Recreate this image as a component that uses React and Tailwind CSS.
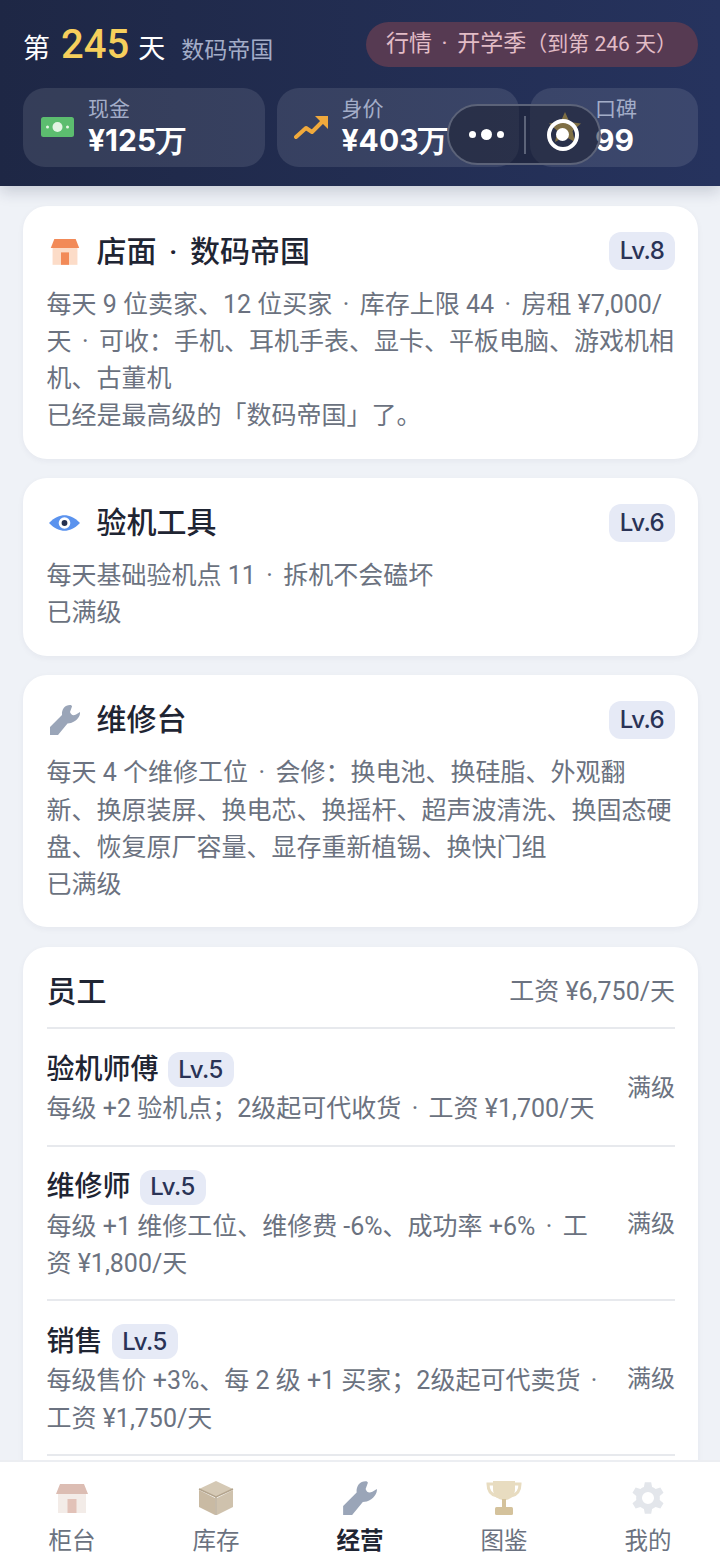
const font = '"Roboto", "Noto Sans CJK SC", sans-serif'

// the middle dot sits wider in the original than in these fonts
const dotted = text => text.replaceAll('·', '\u2006·\u2006')

function Wrench({ className }) {
  return (
    <svg viewBox="0 0 32 32" className={className}>
      <path fill="#9aa5b8" d="M1 31 L1 23 L13 11 C12.5 5 16 1 21 1 C22 1 23 1.5 23 2.5 L21 8 C22 11 24 12 27 10.5 L31 8 C31.5 12 28 17 22 19 L18.5 19.5 L9 31 Z" />
    </svg>
  )
}

function Shop({ roof, wall, door, className }) {
  return (
    <svg viewBox="0 0 36 32" className={className}>
      <path fill={wall} d="M4 12 H32 V31 H4 Z" />
      <path fill={roof} d="M6 2 H30 L34 12 H2 Z" />
      <path fill={door} d="M13.5 17 H22.5 V31 H13.5 Z" />
    </svg>
  )
}

function Eye({ className }) {
  return (
    <svg viewBox="0 0 34 16" className={className}>
      <path fill="#5b93ee" d="M1 8 C7 2 12 0 17 0 C22 0 27 2 33 8 C27 14 22 16 17 16 C12 16 7 14 1 8 Z" />
      <circle cx="17" cy="8" r="6" fill="#fff" />
      <circle cx="17" cy="8" r="3" fill="#24304f" />
    </svg>
  )
}

function LvBadge({ children, className }) {
  return (
    <span className={`inline-flex items-center justify-center bg-[#e6eaf6] text-[#2a3356] font-['Inter'] font-medium text-[24px] tracking-[-0.5px] rounded-[12px] ${className}`}>
      {children}
    </span>
  )
}

function InfoCard({ icon, title, level, lines }) {
  return (
    <div className="bg-white rounded-[24px] pl-[23.5px] pr-[23px] pt-[26px] pb-[24px] shadow-[0_2px_6px_rgba(30,40,70,0.05)]">
      <div className="flex items-center h-[38px]">
        <div className="w-[36px] flex justify-center mr-[14px]">{icon}</div>
        <div className="flex-1 text-[30px] font-medium text-[#1f2533]">{dotted(title)}</div>
        <LvBadge className="w-[66px] h-[38px]">{level}</LvBadge>
      </div>
      <div className="mt-[15.5px] text-[25px] leading-[37.3px] text-[#6b7280]">
        {lines.map((l, i) => <div key={i}>{dotted(l)}</div>)}
      </div>
    </div>
  )
}

const staff = [
  { name: '验机师傅', desc: '每级 +2 验机点；2级起可代收货 · 工资 ¥1,700/天' },
  { name: '维修师', desc: '每级 +1 维修工位、维修费 -6%、成功率 +6% · 工资 ¥1,800/天' },
  { name: '销售', desc: '每级售价 +3%、每 2 级 +1 买家；2级起可代卖货 · 工资 ¥1,750/天' },
]

function StatCard({ icon, label, value, className }) {
  return (
    <div className={`relative h-[79px] rounded-[22px] bg-white/10 flex items-center ${className}`}>
      <div className="w-[65px] pl-[4px] flex justify-center shrink-0 -mt-[2px]">{icon}</div>
      <div className="flex flex-col -mt-[1px]">
        <span className="text-[21px] leading-[26px] text-[#a3adc8]">{label}</span>
        <span className="font-['Inter'] text-[30px] leading-[36px] font-bold text-white whitespace-nowrap">{value}</span>
      </div>
    </div>
  )
}

const tabs = [
  { label: '柜台', icon: <Shop roof="#dcbdb3" wall="#f3ece8" door="#e2c2b8" className="w-[36px] h-[32px]" /> },
  {
    label: '库存',
    icon: (
      <svg viewBox="0 0 36 36" className="w-[36px] h-[36px]">
        <path fill="#d5c9b5" d="M18 1 L35 9 L18 17 L1 9 Z" />
        <path fill="#c9baa3" d="M1 10 L17 18 V35 L1 27 Z" />
        <path fill="#cfc2ad" d="M35 10 L19 18 V35 L35 27 Z" />
        <path fill="none" stroke="#b3a48d" strokeWidth="1.5" d="M1 9 L18 17 L35 9 M18 17 V35" />
      </svg>
    ),
  },
  { label: '经营', active: true, icon: <Wrench className="w-[36px] h-[36px]" /> },
  {
    label: '图鉴',
    icon: (
      <svg viewBox="0 0 36 36" className="w-[36px] h-[36px]">
        <path fill="none" stroke="#e8dcc0" strokeWidth="3" d="M8 4 H2 C2 11 5 15 11 16 M28 4 H34 C34 11 31 15 25 16" />
        <path fill="#e8dcc0" d="M7 1 H29 V9 C29 16 24 20 18 20 C12 20 7 16 7 9 Z" />
        <path fill="#d4c29c" d="M16 19 H20 V28 H16 Z" />
        <rect x="9" y="27" width="18" height="8" rx="1.5" fill="#d4c29c" />
      </svg>
    ),
  },
  {
    label: '我的',
    icon: (
      <svg viewBox="0 0 24 24" className="w-[38px] h-[38px]">
        <path fill="#e3e6eb" fillRule="evenodd" d="M10 1 H14 L14.6 4.1 C15.4 4.4 16.1 4.8 16.8 5.3 L19.8 4.3 L21.8 7.7 L19.4 9.8 C19.5 10.6 19.5 11.4 19.4 12.2 L21.8 14.3 L19.8 17.7 L16.8 16.7 C16.1 17.2 15.4 17.6 14.6 17.9 L14 21 H10 L9.4 17.9 C8.6 17.6 7.9 17.2 7.2 16.7 L4.2 17.7 L2.2 14.3 L4.6 12.2 C4.5 11.4 4.5 10.6 4.6 9.8 L2.2 7.7 L4.2 4.3 L7.2 5.3 C7.9 4.8 8.6 4.4 9.4 4.1 Z M12 7.2 A3.8 3.8 0 1 0 12 14.8 A3.8 3.8 0 1 0 12 7.2 Z" transform="translate(0 1)" />
      </svg>
    ),
  },
]

export default function App() {
  return (
    <div className="h-[1567px] w-[720px] flex flex-col bg-[#eff2f7] overflow-hidden relative" style={{ fontFamily: font }}>
      <header className="relative z-10 h-[186px] shrink-0 pl-[23px] pr-[22px] pt-[22px] bg-gradient-to-r from-[#1e2745] to-[#26335e] shadow-[0_6px_14px_rgba(30,40,70,0.18)]">
        <div className="flex items-center justify-between h-[45px]">
          <div className="flex items-baseline text-white">
            <span className="text-[27px]">第</span>
            <span className="text-[40px] font-medium text-[#f6cf5c] ml-[11px] mr-[9px]">245</span>
            <span className="text-[27px]">天</span>
            <span className="text-[23px] text-[#a3adc8] ml-[16px]">数码帝国</span>
          </div>
          <div className="w-[332px] h-[45px] rounded-full bg-[#563a52] text-[#e2bcc6] text-[23px] flex items-center pl-[20px] whitespace-nowrap">
            {dotted('行情 · 开学季')}<span className="text-[21px]">（到第 246 天）</span>
          </div>
        </div>
        <div className="flex gap-[11.5px] mt-[21px]">
          <StatCard
            className="w-[242px]"
            label="现金"
            value="¥125万"
            icon={
              <svg viewBox="0 0 33 20" className="w-[33px] h-[20px]">
                <rect width="33" height="20" rx="2.5" fill="#5cbd6f" />
                <circle cx="16.5" cy="10" r="5" fill="#e2f4e3" />
                <circle cx="6.5" cy="10" r="1.5" fill="#e2f4e3" />
                <circle cx="26.5" cy="10" r="1.5" fill="#e2f4e3" />
              </svg>
            }
          />
          <StatCard
            className="w-[242px]"
            label="身价"
            value="¥403万"
            icon={
              <svg viewBox="0 0 34 24" className="w-[34px] h-[24px]">
                <path fill="none" stroke="#f0a93c" strokeWidth="4" strokeLinecap="round" strokeLinejoin="round" d="M2 22 L12 13 L18 17 L30 5" />
                <path fill="#f0a93c" d="M21 1 H34 V14 Z" />
              </svg>
            }
          />
          <StatCard
            className="w-[168px]"
            label="口碑"
            value="99"
            icon={
              <svg viewBox="0 0 32 30" className="w-[32px] h-[30px]">
                <path fill="#f6cf5c" d="M16 0 L20.5 10 L32 11.5 L23.5 19 L26 30 L16 24.5 L6 30 L8.5 19 L0 11.5 L11.5 10 Z" />
              </svg>
            }
          />
        </div>
        <div className="absolute left-[447px] top-[104px] w-[154px] h-[61px] rounded-full bg-[#1d2031]/55 border-2 border-[#5c6379] flex items-center">
          <div className="w-[75px] flex items-center justify-center gap-[5px]">
            <span className="w-[7px] h-[7px] rounded-full bg-white" />
            <span className="w-[11px] h-[11px] rounded-full bg-white" />
            <span className="w-[7px] h-[7px] rounded-full bg-white" />
          </div>
          <div className="w-[2px] h-[38px] bg-[#5c6379]" />
          <div className="flex-1 flex items-center justify-center">
            <div className="w-[32px] h-[32px] rounded-full border-[4px] border-white flex items-center justify-center">
              <span className="w-[13px] h-[13px] rounded-full bg-white" />
            </div>
          </div>
        </div>
      </header>

      <main className="flex-1 overflow-hidden pl-[23px] pr-[22px] pt-[20px] flex flex-col gap-[19px]">
        <InfoCard
          icon={<Shop roof="#f28a58" wall="#fcdcc8" door="#f28a58" className="w-[32px] h-[29px]" />}
          title="店面 · 数码帝国"
          level="Lv.8"
          lines={['每天 9 位卖家、12 位买家 · 库存上限 44 · 房租 ¥7,000/天 · 可收：手机、耳机手表、显卡、平板电脑、游戏机相机、古董机', '已经是最高级的「数码帝国」了。']}
        />
        <InfoCard
          icon={<Eye className="w-[33px] h-[16px]" />}
          title="验机工具"
          level="Lv.6"
          lines={['每天基础验机点 11 · 拆机不会磕坏', '已满级']}
        />
        <InfoCard
          icon={<Wrench className="w-[32px] h-[32px]" />}
          title="维修台"
          level="Lv.6"
          lines={['每天 4 个维修工位 · 会修：换电池、换硅脂、外观翻新、换原装屏、换电芯、换摇杆、超声波清洗、换固态硬盘、恢复原厂容量、显存重新植锡、换快门组', '已满级']}
        />
        <div className="bg-white rounded-[24px] mt-[1px] pl-[23.5px] pr-[23px] pb-[80px] shrink-0 shadow-[0_2px_6px_rgba(30,40,70,0.05)]">
          <div className="flex items-center justify-between h-[82px] pt-[8px] border-b-2 border-[#e7e9ed]">
            <span className="text-[30px] font-medium text-[#1f2533]">员工</span>
            <span className="text-[25px] text-[#6b7280]">工资 ¥6,750/天</span>
          </div>
          {staff.map(s => (
            <div key={s.name} className="flex items-center gap-[20px] pt-[23px] pb-[17px] border-b-2 border-[#e7e9ed]">
              <div className="flex-1">
                <div className="flex items-center h-[35px]">
                  <span className="text-[28px] font-medium text-[#1f2533]">{s.name}</span>
                  <LvBadge className="ml-[9px] w-[66px] h-[35px]">Lv.5</LvBadge>
                </div>
                <div className="mt-[3px] text-[25px] leading-[37.3px] text-[#6b7280]">{dotted(s.desc)}</div>
              </div>
              <span className="shrink-0 -mt-[4px] text-[24px] text-[#6b7280]">满级</span>
            </div>
          ))}
        </div>
      </main>

      <nav className="h-[107px] shrink-0 relative z-10 bg-white border-t-2 border-[#eceef2] grid grid-cols-5">
        {tabs.map(t => (
          <div key={t.label} className="flex flex-col items-center">
            <div className="h-[36px] mt-[18px] flex items-center justify-center">{t.icon}</div>
            <span className={`mt-[8px] text-[23.5px] leading-[34px] ${t.active ? 'font-bold text-[#1f2533]' : 'text-[#6b7280]'}`}>{t.label}</span>
          </div>
        ))}
      </nav>
    </div>
  )
}
